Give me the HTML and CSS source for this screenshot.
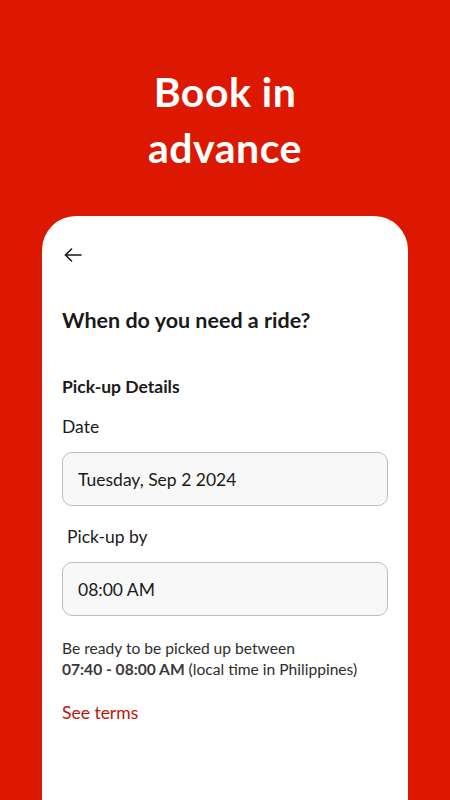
FILE: index.html
```html
<!DOCTYPE html>
<html lang="en">
<head>
    <meta charset="UTF-8">
    <meta name="viewport" content="width=device-width, initial-scale=1.0">
    <title>Book in advance</title>
    <link rel="stylesheet" href="styles.css">
</head>
<body>
    <h1 class="promo-title">Book in<br>advance</h1>

    <div class="card">
        <button class="back-button" type="button" aria-label="Back">
            <svg width="18" height="14" viewBox="0 0 18 14" fill="none" stroke="#1a1a1a" stroke-width="1.6" stroke-linecap="round" stroke-linejoin="round">
                <path d="M17 7H1.5"/>
                <path d="M7.5 1L1.5 7l6 6"/>
            </svg>
        </button>

        <h2 class="card-title">When do you need a ride?</h2>

        <h3 class="section-title">Pick-up Details</h3>

        <label class="field-label" for="date">Date</label>
        <input class="field" type="text" id="date" value="Tuesday, Sep 2 2024" readonly>

        <label class="field-label field-label-indent" for="time">Pick-up by</label>
        <input class="field" type="text" id="time" value="08:00 AM" readonly>

        <p class="note">
            Be ready to be picked up between<br>
            <strong>07:40 - 08:00 AM</strong> (local time in Philippines)
        </p>

        <a class="terms-link" href="#">See terms</a>
    </div>
</body>
</html>
```

FILE: styles.css
```css
body {
    font-family: Lato, "Open Sans", sans-serif;
    background-color: #dc1900;
    margin: 0;
    padding: 0;
    height: 800px;
    overflow: hidden;
    color: #1a1a1a;
}

.promo-title {
    margin: 0;
    padding-top: 64px;
    height: 216px;
    box-sizing: border-box;
    text-align: center;
    color: #ffffff;
    font-size: 41px;
    line-height: 56px;
    font-weight: 700;
    letter-spacing: 0.5px;
}

.card {
    background-color: #ffffff;
    margin: 0 42px;
    height: 620px;
    border-radius: 34px 34px 0 0;
    padding: 28px 20px 0;
    box-sizing: border-box;
    display: flex;
    flex-direction: column;
    align-items: flex-start;
}

.back-button {
    background: none;
    border: none;
    padding: 0;
    margin: 4px 0 0 2px;
    width: 18px;
    height: 14px;
    display: block;
    cursor: pointer;
}

.card-title {
    margin: 44px 0 0;
    font-size: 21.5px;
    line-height: 28px;
    font-weight: 700;
}

.section-title {
    margin: 42px 0 0;
    font-size: 17.5px;
    line-height: 22px;
    font-weight: 700;
}

.field-label {
    margin-top: 18px;
    font-size: 17.5px;
    line-height: 22px;
}

.field-label-indent {
    margin-left: 5px;
}

.field {
    margin-top: 14px;
    width: 100%;
    height: 54px;
    box-sizing: border-box;
    border: 1px solid #bdbdbd;
    border-radius: 10px;
    background-color: #f8f8f8;
    padding: 0 15px;
    font-family: inherit;
    font-size: 17.5px;
    color: #1a1a1a;
    outline: none;
}

.field + .field-label {
    margin-top: 20px;
}

.field-label-indent + .field {
    margin-top: 14px;
}

.note {
    margin: 22px 0 0;
    font-size: 15.6px;
    line-height: 21px;
    color: #2e2e2e;
}

.note strong {
    font-weight: 700;
    color: #3a3a3a;
}

.terms-link {
    margin-top: 22px;
    font-size: 17.5px;
    line-height: 22px;
    color: #c4110a;
    text-decoration: none;
}
```
